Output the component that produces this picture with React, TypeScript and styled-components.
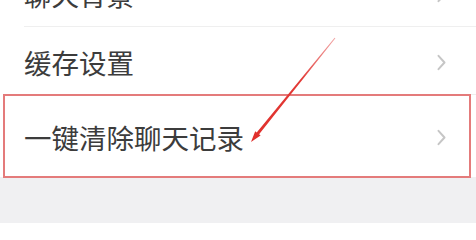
import React from "react"
import styled, { createGlobalStyle } from "styled-components"

const GlobalStyle = createGlobalStyle`
  html, body {
    margin: 0;
    padding: 0;
    background: #ffffff;
  }
  body {
    font-family: "Noto Sans CJK SC", "Noto Sans", sans-serif;
    overflow: hidden;
  }
`

const Page = styled.div`
  position: relative;
  width: 476px;
  height: 240px;
  overflow: hidden;
  background: #ffffff;
`

const List = styled.div`
  display: flex;
  flex-direction: column;
  margin-top: -41px;
  background: #ffffff;
`

const Row = styled.div<{ $height: number; $last?: boolean }>`
  position: relative;
  display: flex;
  align-items: center;
  justify-content: space-between;
  height: ${p => p.$height}px;
  padding: 3px 29px 0 24px;
  box-sizing: border-box;
  &::after {
    content: "";
    display: ${p => (p.$last ? "none" : "block")};
    position: absolute;
    left: 24px;
    right: 0;
    bottom: 0;
    height: 1px;
    background: #efefef;
  }
`

const Label = styled.span`
  font-size: 27.5px;
  color: #3c3c3c;
  line-height: 1;
`

const Chevron = styled.svg`
  width: 11px;
  height: 17px;
  flex: none;
`

const GapBand = styled.div`
  height: 46px;
  background: #f0f0f2;
`

const Highlight = styled.div`
  position: absolute;
  left: 3px;
  top: 94px;
  width: 468px;
  height: 84px;
  box-sizing: border-box;
  border: 2px solid #e47b7b;
  pointer-events: none;
`

const Arrow = styled.svg`
  position: absolute;
  left: 0;
  top: 0;
  width: 476px;
  height: 240px;
  pointer-events: none;
`

const items = [
  { label: "聊天背景", height: 68 },
  { label: "缓存设置", height: 68 },
  { label: "一键清除聊天记录", height: 82 },
]

const App = () => {
  return (
    <>
      <GlobalStyle />
      <Page>
        <List>
          {items.map((item, i) => (
            <Row key={item.label} $height={item.height} $last={i === items.length - 1}>
              <Label>{item.label}</Label>
              <Chevron viewBox="0 0 11 17">
                <path d="M2.5 1.8 L8.5 8.5 L2.5 15.2" fill="none" stroke="#c6c6c6" strokeWidth="2" strokeLinecap="round" strokeLinejoin="round" />
              </Chevron>
            </Row>
          ))}
          <GapBand />
        </List>
        <Highlight />
        <Arrow viewBox="0 0 476 240">
          <defs>
            <linearGradient id="arrowFade" x1="335" y1="38" x2="251" y2="142" gradientUnits="userSpaceOnUse">
              <stop offset="0" stopColor="#e86a6a" stopOpacity="0.6" />
              <stop offset="0.4" stopColor="#e23a36" />
              <stop offset="1" stopColor="#e0302c" />
            </linearGradient>
          </defs>
          <polygon
            points="334.6,37.7 335.4,38.3 259.1,134.3 260.6,135.6 251,142 255.2,131.2 256.7,132.5"
            fill="url(#arrowFade)"
          />
        </Arrow>
      </Page>
    </>
  )
}

export default App
